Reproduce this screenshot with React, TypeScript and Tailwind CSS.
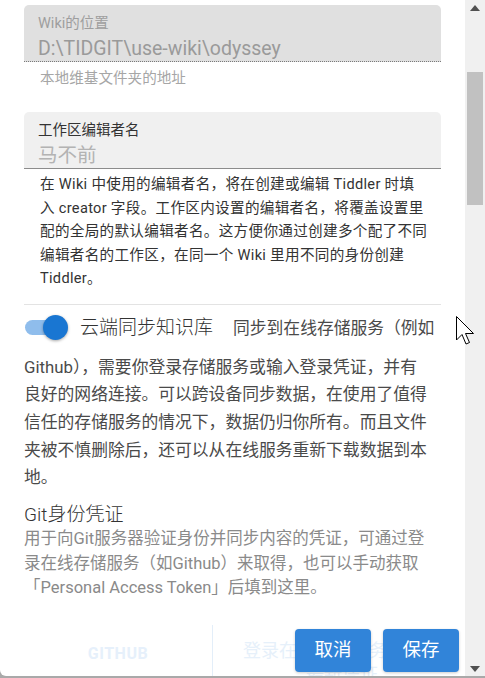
import React from "react";

const FONT = "font-['Roboto','Noto_Sans_CJK_SC',sans-serif]";

function Scrollbar() {
  return (
    <div className="relative w-[20px] h-full bg-[#f0f0f0]">
      <svg className="absolute left-[5px] top-[5px]" width="10" height="6" viewBox="0 0 10 6">
        <polygon points="0,6 10,6 5,0" fill="#505050" />
      </svg>
      <div className="absolute left-[2px] top-[72px] w-[16px] h-[133px] bg-[#c1c1c1]" />
      <svg className="absolute left-[5px] bottom-[4px]" width="10" height="6" viewBox="0 0 10 6">
        <polygon points="0,0 10,0 5,6" fill="#505050" />
      </svg>
    </div>
  );
}

export default function App() {
  return (
    <div className={`relative w-[485px] h-[678px] overflow-hidden bg-[#a9a9a9] ${FONT}`}>
      <div className="flex h-[676px] bg-white rounded-bl-[6px] overflow-hidden">
        <div className="relative flex-1 px-6 overflow-hidden">
          {/* Field 1 */}
          <div className="mt-[5px] h-[57px] bg-[#e0e0e0] rounded-t-[5px] border-b border-dotted border-[#7a7a7a] pl-[14px] pt-[10px]">
            <div className="text-[14.5px] leading-[18px] text-[#9e9e9e]">Wiki的位置</div>
            <div className="mt-[4px] text-[19.5px] leading-[24px] text-[#9a9a9a]">D:\TIDGIT\use-wiki\odyssey</div>
          </div>
          <div className="mt-[6px] pl-4 text-[14.6px] leading-[20px] text-[#a6a6a6]">本地维基文件夹的地址</div>

          {/* Field 2 */}
          <div className="mt-[24px] h-[57px] bg-[#f0f0f0] rounded-t-[5px] border-b border-[#8c8c8c] pl-[14px] pt-[10px]">
            <div className="text-[14.5px] leading-[18px] text-[#333333]">工作区编辑者名</div>
            <div className="mt-[4px] text-[19.5px] leading-[24px] text-[#b3b3b3]">马不前</div>
          </div>
          <div className="mt-[4px] pl-4 text-[14.6px] leading-[23.5px] text-[#333333] whitespace-nowrap tracking-[0.3px]">
            <div>在 Wiki 中使用的编辑者名，将在创建或编辑 Tiddler 时填</div>
            <div>入 creator 字段。工作区内设置的编辑者名，将覆盖设置里</div>
            <div>配的全局的默认编辑者名。这方便你通过创建多个配了不同</div>
            <div>编辑者名的工作区，在同一个 Wiki 里用不同的身份创建</div>
            <div>Tiddler。</div>
          </div>

          <div className="mt-[13px] border-t border-[#e3e3e3]" />

          {/* Sync toggle */}
          <div className="flex items-center h-[40px] mt-[3px]">
            <div className="relative w-[44px] h-[25px] shrink-0">
              <div className="absolute left-[1px] top-[5px] w-[38px] h-[15px] rounded-full bg-[#8fbdec]" />
              <div className="absolute right-0 top-0 w-[25px] h-[25px] rounded-full bg-[#1976d2] shadow-[0_1px_3px_rgba(0,0,0,0.35)]" />
            </div>
            <span className="ml-[12px] text-[19px] leading-[26px] font-light text-[#333333] whitespace-nowrap">云端同步知识库</span>
            <span className="ml-[20px] text-[16.8px] leading-[26px] text-[#4a4a4a] whitespace-nowrap">同步到在线存储服务（例如</span>
          </div>
          <div className="mt-[6px] text-[16.8px] leading-[27.7px] text-[#4a4a4a] whitespace-nowrap">
            <div>Github），需要你登录存储服务或输入登录凭证，并有</div>
            <div>良好的网络连接。可以跨设备同步数据，在使用了值得</div>
            <div>信任的存储服务的情况下，数据仍归你所有。而且文件</div>
            <div>夹被不慎删除后，还可以从在线服务重新下载数据到本</div>
            <div>地。</div>
          </div>

          <div className="mt-[12px] text-[19px] leading-[22px] font-light text-[#333333]">Git身份凭证</div>
          <div className="mt-[1px] text-[16.5px] leading-[24.5px] text-[#8a8a8a] whitespace-nowrap">
            <div>用于向Git服务器验证身份并同步内容的凭证，可通过登</div>
            <div>录在线存储服务（如Github）来取得，也可以手动获取</div>
            <div>「Personal Access Token」后填到这里。</div>
          </div>

          {/* faded tabs */}
          <div className="mt-[24px] flex h-[60px]">
            <div className="w-[188px] flex items-start justify-center pt-[17px] text-[16px] font-bold text-[#e6f0fb] tracking-[0.5px]">GITHUB</div>
            <div className="w-px bg-[#e3eef9]" />
            <div className="pl-[30px] pt-[14px] text-[18px] leading-[24px] text-[#e6f0fa] text-center">
              <div>登录在线存储服务以获取</div>
              <div>最新凭证</div>
            </div>
          </div>
        </div>
        <Scrollbar />
      </div>

      {/* action buttons */}
      <div className="absolute left-[295px] top-[629px] flex gap-[12px]">
        <button className="w-[76px] h-[43px] rounded-[4px] bg-[#3184d9] text-white text-[18.5px] shadow-[0_1px_3px_rgba(0,0,0,0.2)]">取消</button>
        <button className="w-[76px] h-[43px] rounded-[4px] bg-[#3184d9] text-white text-[18.5px] shadow-[0_1px_3px_rgba(0,0,0,0.2)]">保存</button>
      </div>

      {/* mouse cursor */}
      <svg className="absolute left-[456px] top-[316px]" width="20" height="30" viewBox="0 0 20 30">
        <polygon points="0.5,0.5 0.5,24 6,18.5 10,28 13.5,26.5 9.5,17.5 17.5,17.5" fill="#ffffff" stroke="#000000" strokeWidth="1" strokeLinejoin="miter" />
      </svg>
    </div>
  );
}
